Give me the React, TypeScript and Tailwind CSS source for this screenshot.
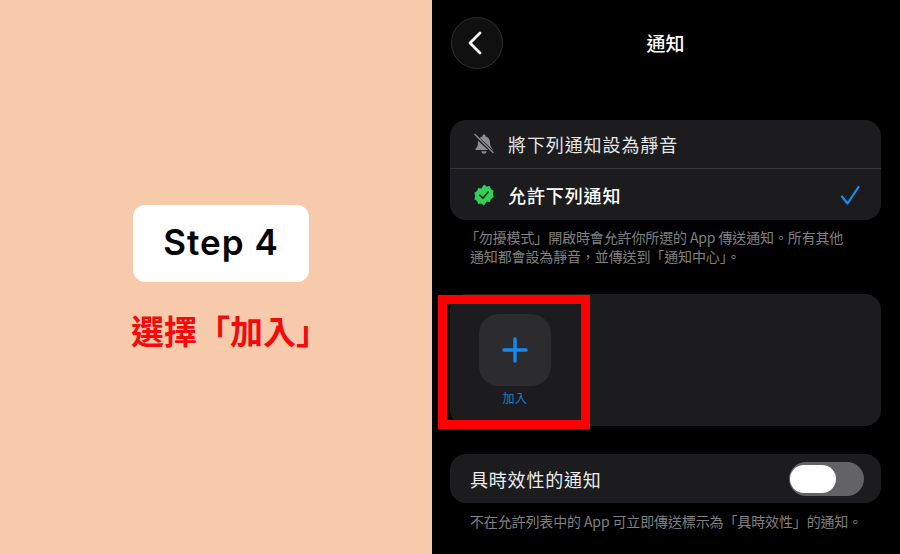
import React from "react";

const cjk = { fontFamily: '"Noto Sans CJK TC", "Noto Sans", sans-serif' };

function MutedBell() {
  return (
    <svg width="22" height="22" viewBox="0 0 22 22" className="block">
      <path d="M11 1.500c.9 0 1.500.6 1.500 1.500v.5c3 .7 4.600 3.200 4.600 6.400 0 3 .9 4.400 2.400 6v1.100H2.500v-1.100c1.500-1.600 2.400-3 2.400-6 0-3.200 1.600-5.700 4.600-6.400V3c0-.9.600-1.500 1.500-1.500z" fill="#8e8e93" />
      <path d="M8.300 18.200h5.400c-.2 1.400-1.300 2.300-2.700 2.300s-2.500-.9-2.700-2.300z" fill="#8e8e93" />
      <path d="M2 2.500l18 17" stroke="#1c1c1e" strokeWidth="3.200" />
      <path d="M2 1.500l18 18" stroke="#8e8e93" strokeWidth="1.400" strokeLinecap="round" />
    </svg>
  );
}

function GreenBadge() {
  return (
    <svg width="22" height="22" viewBox="0 0 22 22" className="block">
      <path d="M11 0.500l2.600 1.900 3.200-.3 1.100 3 2.700 1.700-.8 3.200.8 3.200-2.700 1.700-1.100 3-3.200-.3L11 21.500l-2.600-1.900-3.200.3-1.100-3-2.700-1.700.8-3.200-.8-3.200 2.700-1.700 1.100-3 3.200.3z" fill="#30d158" />
      <path d="M7 11.300l2.900 2.900L15.200 8" fill="none" stroke="#10260f" strokeWidth="1.700" strokeLinecap="round" strokeLinejoin="round" />
    </svg>
  );
}

export default function App() {
  return (
    <div lang="zh-TW" className="flex w-[900px] h-[554px] overflow-hidden" style={cjk}>
      <div className="w-[432px] h-full bg-[#f7caac] flex flex-col items-center pt-[205px] pl-[10px]">
        <div className="w-[176px] h-[77px] rounded-[12px] bg-white flex items-center justify-center pb-[2px]">
          <span className="text-[35px] leading-none font-semibold text-black tracking-[1px]" style={{ fontFamily: "Inter, sans-serif" }}>
            Step 4
          </span>
        </div>
        <div className="mt-[24px] ml-[18px] text-[33px] leading-[48px] font-bold text-[#f40a0a] whitespace-nowrap">選擇「加入」</div>
      </div>

      <div className="relative w-[468px] h-full bg-black pl-[18px] pr-[19px] text-white">
        <div className="relative h-[120px]">
          <div className="absolute left-[1px] top-[17px] w-[52px] h-[52px] rounded-full bg-[#101010] border border-[#2e2e2e] flex items-center justify-center">
            <svg width="18" height="24" viewBox="0 0 18 24" fill="none" className="block -ml-[4px]">
              <path d="M14 2L4 12l10 10" stroke="#fff" strokeWidth="2.800" strokeLinecap="round" strokeLinejoin="round" />
            </svg>
          </div>
          <div className="absolute left-0 right-0 top-[30px] text-center text-[19px] leading-[26px] font-medium">通知</div>
        </div>

        <div className="h-[100px] rounded-[16px] bg-[#1c1c1e] flex flex-col">
          <div className="h-[49px] flex items-center pl-[23px] border-b border-[#38383a]">
            <MutedBell />
            <span className="ml-[13px] text-[18px] leading-none tracking-[0.9px] text-[#e6e6e6]">將下列通知設為靜音</span>
          </div>
          <div className="flex-1 flex items-center pl-[23px] pr-[21px]">
            <GreenBadge />
            <span className="ml-[13px] text-[18px] leading-none tracking-[0.9px] font-medium text-white">允許下列通知</span>
            <svg width="20" height="20" viewBox="0 0 20 20" fill="none" className="block ml-auto">
              <path d="M2 11.500l5.500 7L18.500 2" stroke="#1a8cf0" strokeWidth="2.200" strokeLinecap="round" strokeLinejoin="round" />
            </svg>
          </div>
        </div>

        <div className="mt-[8px] pl-[20px] pr-[30px] text-[14px] leading-[19px] tracking-[-0.13px] text-[#808080] h-[66px]">
          <div className="-ml-[5px] whitespace-nowrap">{"「勿擾模式」開啟時會允許你所選的 App 傳送通知\u3002所有其他"}</div>
          <div className="whitespace-nowrap">{"通知都會設為靜音\uFF0C並傳送到「通知中心」\u3002"}</div>
        </div>

        <div className="h-[132px] rounded-[16px] bg-[#1c1c1e] pl-[29px] pt-[20px]">
          <div className="w-[72px] h-[72px] rounded-[20px] bg-[#2c2c2e] flex items-center justify-center">
            <svg width="26" height="26" viewBox="0 0 26 26" fill="none" className="block">
              <path d="M13 2v22M2 13h22" stroke="#0f8cf5" strokeWidth="3.400" strokeLinecap="round" />
            </svg>
          </div>
          <div className="w-[72px] mt-[3px] text-center text-[12px] leading-[17px] tracking-[0.5px] text-[#1a7fd4]">加入</div>
        </div>

        <div className="absolute left-[6px] top-[295px] w-[152px] h-[134px] border-[9px] border-[#fe0000]" />

        <div className="mt-[28px] h-[49px] rounded-[16px] bg-[#1c1c1e] flex items-center pl-[20px] pr-[17px]">
          <span className="text-[18px] leading-none tracking-[0.8px] text-[#ececec]">具時效性的通知</span>
          <div className="ml-auto w-[75px] h-[34px] rounded-full bg-[#636366] flex items-center pl-[1px]">
            <div className="w-[46px] h-[28px] rounded-full bg-white" />
          </div>
        </div>

        <div className="mt-[9px] pl-[20px] text-[14px] leading-[19px] tracking-[-0.13px] text-[#808080] whitespace-nowrap">
          {"不在允許列表中的 App 可立即傳送標示為「具時效性」的通知\u3002"}
        </div>
      </div>
    </div>
  );
}
